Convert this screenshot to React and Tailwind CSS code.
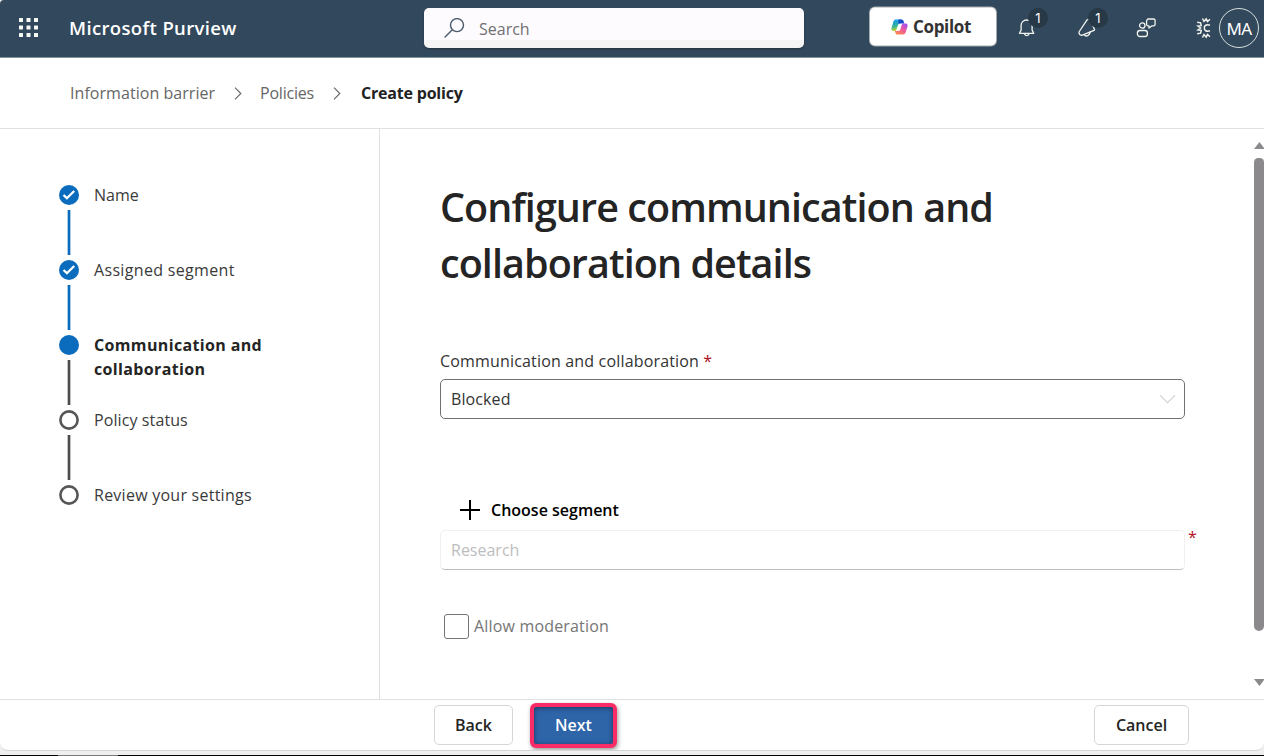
import React from "react";

const STEPS = [
  { label: "Name", state: "done" },
  { label: "Assigned segment", state: "done" },
  { label: "Communication and collaboration", state: "current" },
  { label: "Policy status", state: "todo" },
  { label: "Review your settings", state: "todo" },
];

const LABEL_STYLE = {
  Name: "tracking-[0px]",
  "Assigned segment": "tracking-[0.33px]",
  "Communication and collaboration": "font-bold tracking-[0.35px] text-[#242424]",
  "Policy status": "tracking-[0.1px]",
  "Review your settings": "tracking-[0.25px]",
};

function StepMark({ state }) {
  if (state === "todo") {
    return (
      <svg className="shrink-0" width="20" height="20" viewBox="0 0 20 20" fill="none" stroke="#565656" strokeWidth="2.6">
        <circle cx="10" cy="10" r="8.600" />
      </svg>
    );
  }
  return (
    <span className="flex size-5 shrink-0 items-center justify-center rounded-full bg-[#0b6cbd]">
      {state === "done" && (
        <svg width="14" height="12" viewBox="0 0 14 12" fill="none" stroke="#fff" strokeWidth="2.3">
          <path d="M1.500 6 4.900 9.200 12.200 2" />
        </svg>
      )}
    </span>
  );
}

function StepLine({ done }) {
  return (
    <svg className="shrink-0" width="20" height="45" viewBox="0 0 20 45" fill="none" stroke={done ? "#0b6cbd" : "#4d4d4d"} strokeWidth="2.700">
      <path d="M10 0v45" />
    </svg>
  );
}

function Chevron() {
  return (
    <svg width="8" height="14" viewBox="0 0 8 14" fill="none" stroke="#6b6b6b" strokeWidth="1.2">
      <path d="M1 1.700 6.800 7.500 1 13.300" />
    </svg>
  );
}

function Badge() {
  return (
    <span className="absolute -top-2.5 left-2.5 flex size-5 items-center justify-center rounded-full bg-[#273847] font-['Inter',sans-serif] text-[13px] leading-none text-white">
      1
    </span>
  );
}

function CopilotLogo() {
  return (
    <svg width="17" height="17" viewBox="0 0 17 17">
      <defs>
        <linearGradient id="cpLeft" x1="0.3" y1="0" x2="0.5" y2="1">
          <stop offset="0" stopColor="#1399f5" />
          <stop offset="0.55" stopColor="#2fb49a" />
          <stop offset="1" stopColor="#d8d420" />
        </linearGradient>
        <linearGradient id="cpRight" x1="0.8" y1="0" x2="0.2" y2="1">
          <stop offset="0" stopColor="#a24df0" />
          <stop offset="0.5" stopColor="#ee5b9b" />
          <stop offset="1" stopColor="#ff8a4c" />
        </linearGradient>
      </defs>
      <path d="M5.400 1h5.200L9.200 4.800h-.4c-.9 0-1.400.6-1.800 1.800l-1.400 4.100c-.4 1.200-1 1.800-2.200 1.800H2.400C.8 12.500 0 11.300.5 9.500l1.900-6.400C2.900 1.600 3.900 1 5.400 1Z" fill="url(#cpLeft)" />
      <path d="M7.500 1h3.100c1.200 0 1.700.8 2 1.800l.7 2.100H9.200c-.8 0-1.300.3-1.700 1Z" fill="#1748c8" />
      <path d="M11.600 16H6.400c-1.200 0-1.700-.8-2-1.800l-.6-1.800h3.600c1 0 1.600-.5 2-1.600l1.200-4.100c.4-1.200 1-1.800 2.200-1.800h1.800c1.700 0 2.400 1.300 1.900 3.100l-1.900 6C14.100 15.400 13.100 16 11.600 16Z" fill="url(#cpRight)" />
      <path d="M7.100 10 8.200 6.700c.2-.6.500-.9 1-.9h.8l-1.100 3.400c-.2.600-.5.8-1 .8Z" fill="#fff" />
    </svg>
  );
}

function Header() {
  return (
    <header className="flex h-[58px] shrink-0 items-center border-b border-[#82929a] bg-[#32485c] pb-px text-white">
      <svg className="ml-[19px]" width="20" height="20" viewBox="0 0 20 20" fill="#f7fbf5">
        {[0, 7.5, 15].map((y) =>
          [0, 7.5, 15].map((x) => <rect key={`${x}-${y}`} x={x} y={y} width="4" height="4" rx="0.5" />)
        )}
      </svg>
      <div className="ml-[30px] w-[355px] text-[18.5px] font-semibold tracking-[0.36px]">Microsoft Purview</div>
      <div className="flex h-10 w-[380px] items-center rounded-[5px] bg-linear-to-b from-[#fefbff] from-80% to-[#f5f5f5] to-80% text-[#707070] shadow-[0_1px_2px_rgba(0,0,0,0.3)]">
        <svg className="ml-5" width="21" height="21" viewBox="0 0 21 21" fill="none" stroke="#4a5b6c" strokeWidth="1.4">
          <circle cx="13" cy="7.100" r="6.500" />
          <path d="M8.300 11.800.600 19.500" />
        </svg>
        <span className="ml-3.5 pt-0.5 text-[16px]">Search</span>
      </div>
      <button className="ml-[66px] flex h-[38px] w-[126px] -translate-y-[1.5px] items-center justify-center gap-[5px] rounded-[5px] bg-white pr-1 text-[17px] font-bold tracking-[-0.35px] text-[#333] shadow-[0_0_0_1px_#a5aab0]">
        <CopilotLogo />
        Copilot
      </button>
      <div className="relative ml-[22px]">
        <svg width="18" height="20" viewBox="0 0 18 20" fill="none" stroke="#f1f4ee" strokeWidth="1.300" strokeLinejoin="round">
          <path d="M1.500 15.300h14.200l-1.600-3.200V7.500A5.500 5.500 0 0 0 3.100 7.500v4.600Z" />
          <path d="M6.400 15.700a2.400 2.400 0 0 0 4.700 0" />
        </svg>
        <Badge />
      </div>
      <div className="relative ml-[42px]">
        <svg width="20" height="20" viewBox="0 0 20 20" fill="none" stroke="#f1f4ee" strokeWidth="1.300" strokeLinejoin="round">
          <path d="M9 1.800 1.300 13.500c-.6 1.400-.2 2.900 1 3.400l1.400.5 13-5.300" />
          <path d="M9 1.800c1.800-1 3.300-.2 4.600 2.500l3.100 7.800M6 16.600c1 2.200 5.600 2 6.200-2.900" />
        </svg>
        <Badge />
      </div>
      <svg className="ml-[38px]" width="20" height="20" viewBox="0 0 20 20" fill="none" stroke="#f1f4ee" strokeWidth="1.300" strokeLinejoin="round">
        <circle cx="6.300" cy="7.500" r="2.700" />
        <rect x="1.400" y="12.500" width="10" height="6" rx="2.600" />
        <path d="M11.700 1h5.800a1.600 1.600 0 0 1 1.600 1.600v3.700a1.600 1.600 0 0 1-1.600 1.600h-1.700L13 10V7.900h-.8a1.600 1.600 0 0 1-1.600-1.600V2.600Z" />
      </svg>
      <svg className="ml-10" width="15" height="22" viewBox="0 0 15 22" fill="none" stroke="#f1f4ee" strokeWidth="1.500">
        <path d="M14 8.200c-3.800-1.200-5.700.4-5.700 2.800s1.900 4 5.700 2.800" />
        <path d="M6.500 1.500 8 4.500l2.200-2.700 1.300 2.700L14 2.300M6.500 20.500 8 17.500l2.200 2.700 1.300-2.700 2.500 2.200M1.200 5.200l3.400.6.6 2.900L1.800 9l2.700 2-2.700 2 3.400.3-.6 2.900-3.400.6" />
      </svg>
      <div className="ml-2 flex size-10 items-center justify-center rounded-full border-[1.500px] border-[#d8e0df] pt-0.5 font-['Noto_Sans',sans-serif] text-[17px] tracking-[-0.6px]">
        MA
      </div>
    </header>
  );
}

export default function App() {
  return (
    <div className="flex h-[756px] w-[1264px] flex-col overflow-hidden bg-[#efefef] font-['Open_Sans','Noto_Sans',sans-serif] text-[16px] text-[#333]">
      <div className="flex h-[751px] flex-col overflow-hidden rounded-tl-[4px] rounded-b-[8px] border-b border-[#d4d4d4] bg-white">
        <Header />
        <nav className="flex h-[71px] shrink-0 items-center border-b border-[#e0e0e0] pb-px pl-[70px] text-[#666]">
          <span className="w-[146px] whitespace-nowrap tracking-[0.05px]">Information barrier</span>
          <span className="ml-[18px]"><Chevron /></span>
          <span className="ml-[18px] w-[54px] whitespace-nowrap tracking-[-0.2px]">Policies</span>
          <span className="ml-[19px]"><Chevron /></span>
          <span className="ml-5 font-bold whitespace-nowrap tracking-[-0.2px] text-[#222]">Create policy</span>
        </nav>
        <main className="flex min-h-0 flex-1">
          <aside className="w-[380px] shrink-0 border-r border-[#e0e0e0] pt-14 pl-[59px]">
            {STEPS.map((s, i) => (
              <div key={s.label} className="flex h-[75px] gap-[15px]">
                <div className="flex w-5 flex-col items-center gap-[5px]">
                  <StepMark state={s.state} />
                  {i < STEPS.length - 1 && <StepLine done={s.state === "done"} />}
                </div>
                <div className={`w-[190px] -mt-0.5 leading-6 text-[#3a3a3a] ${LABEL_STYLE[s.label]}`}>{s.label}</div>
              </div>
            ))}
          </aside>
          <section className="min-w-0 flex-1 pt-[50px] pl-[60px]">
            <h1 className="w-[620px] text-[39.5px] leading-14 font-semibold tracking-[-0.93px] text-[#242424]">
              Configure communication and collaboration details
            </h1>
            <div className="mt-[58px] leading-6">
              <span className="tracking-[0.17px]">Communication and collaboration</span>{" "}
              <span className="text-[#b10e1c]">*</span>
            </div>
            <div className="mt-1.5 flex h-10 w-[745px] items-center justify-between rounded-[5px] border-[1.500px] border-[#707070] pr-2 pl-2.5">
              <span className="tracking-[0.1px]">Blocked</span>
              <svg width="17" height="10" viewBox="0 0 17 10" fill="none" stroke="#d4d4d4" strokeWidth="1.200">
                <path d="M1 1.200 8.500 8.600 16 1.200" />
              </svg>
            </div>
            <div className="mt-[79px] ml-5 flex h-6 items-center gap-[11px] font-semibold text-black">
              <svg width="20" height="20" viewBox="0 0 20 20" fill="none" stroke="#000" strokeWidth="2">
                <path d="M10 0v20M0 10h20" />
              </svg>
              Choose segment
            </div>
            <div className="mt-2 flex items-start gap-[3px]">
              <div className="flex h-10 w-[745px] items-center rounded-[5px] border border-[#f0f0f0] border-b-[#bdbdbd] pl-2.5 text-[#bdbdbd]">
                Research
              </div>
              <span className="-mt-[3px] leading-5 text-[#b10e1c]">*</span>
            </div>
            <div className="mt-11 ml-1 flex h-6 items-center gap-[5px] tracking-[0.17px] text-[#757575]">
              <span className="size-[25px] rounded-[3px] border-[1.500px] border-[#757575]" />
              Allow moderation
            </div>
          </section>
          <div className="flex w-[10px] shrink-0 flex-col items-center pt-[13px]">
            <svg width="10" height="7" viewBox="0 0 10 7" fill="#8b898c"><path d="M0 7 5.500 0 10 6V7Z" /></svg>
            <span className="mt-[9px] h-[473px] w-[10px] rounded-t-[5px] rounded-b-[6px] bg-[#8b898c]" />
            <svg className="mt-12" width="10" height="7" viewBox="0 0 10 7" fill="#8b898c"><path d="M0 0 5.500 7 10 1V0Z" /></svg>
          </div>
        </main>
        <footer className="flex h-[51px] shrink-0 items-center border-t border-[#e0e0e0] pl-[434px] font-semibold text-[#242424]">
          <button className="h-10 w-[79px] rounded-[5px] border border-[#d6d6d6] bg-white">Back</button>
          <button className="ml-[17px] h-[45px] w-[87px] rounded-[6px] border-4 border-[#fa2c68] bg-[#2e64a8] text-white shadow-[1px_2px_4px_rgba(0,0,0,0.4),inset_0_1px_5px_rgba(0,0,0,0.45)]">
            Next
          </button>
          <button className="ml-[477px] h-10 w-[95px] rounded-[5px] border border-[#d6d6d6] bg-white">Cancel</button>
        </footer>
      </div>
      <div className="mt-auto h-px w-full bg-black">
        <div className="ml-[58px] h-px w-[60px] bg-[#777]" />
      </div>
    </div>
  );
}
